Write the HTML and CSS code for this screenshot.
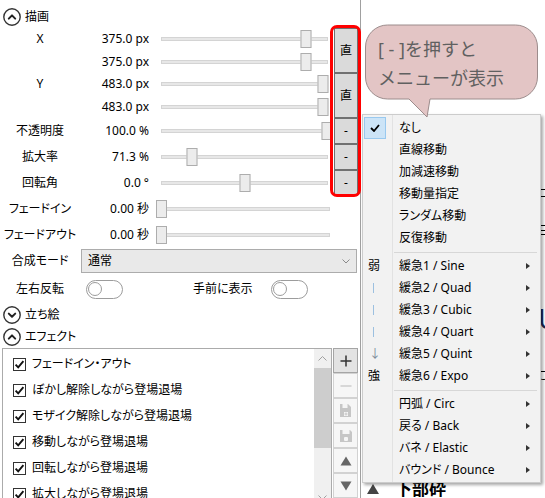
FILE: index.html
```html
<!DOCTYPE html>
<html lang="ja">
<head>
<meta charset="utf-8">
<title>描画</title>
<link rel="stylesheet" href="styles.css">
</head>
<body>
<div class="app">
  <div class="left">
    <div class="hdr first">
      <svg class="circ" viewBox="0 0 18 18" width="18" height="18"><circle cx="9" cy="9" r="8.2" fill="none" stroke="#333" stroke-width="1.4"/><path d="M5.8 10.6 L9 7.4 L12.2 10.6" fill="none" stroke="#222" stroke-width="2" stroke-linecap="round" stroke-linejoin="round"/></svg>
      <span class="ht">描画</span>
    </div>
    <div class="grid">
      <div class="lbl">X</div><div class="val">375.0 px</div>
      <div class="sl"><div class="track"><div class="thumb" style="left:87.1%"></div></div></div>
      <div class="kb span2">直</div>

      <div class="lbl"></div><div class="val">375.0 px</div>
      <div class="sl"><div class="track"><div class="thumb" style="left:87.1%"></div></div></div>

      <div class="lbl">Y</div><div class="val">483.0 px</div>
      <div class="sl"><div class="track"><div class="thumb" style="left:97.6%"></div></div></div>
      <div class="kb span2">直</div>

      <div class="lbl"></div><div class="val">483.0 px</div>
      <div class="sl"><div class="track"><div class="thumb" style="left:97.6%"></div></div></div>

      <div class="lbl">不透明度</div><div class="val">100.0 %</div>
      <div class="sl"><div class="track"><div class="thumb" style="left:100%"></div></div></div>
      <div class="kb">-</div>

      <div class="lbl">拡大率</div><div class="val">71.3 %</div>
      <div class="sl"><div class="track"><div class="thumb" style="left:18.3%"></div></div></div>
      <div class="kb">-</div>

      <div class="lbl">回転角</div><div class="val">0.0 °</div>
      <div class="sl"><div class="track"><div class="thumb" style="left:50.3%"></div></div></div>
      <div class="kb">-</div>

      <div class="lbl">フェードイン</div><div class="val">0.00 秒</div>
      <div class="sl fade"><div class="track"><div class="thumb"></div></div></div>

      <div class="lbl">フェードアウト</div><div class="val">0.00 秒</div>
      <div class="sl fade"><div class="track"><div class="thumb"></div></div></div>
    </div>

    <div class="row dd-row">
      <div class="lbl">合成モード</div>
      <div class="dd"><span>通常</span><svg width="8" height="5" viewBox="0 0 8 5"><path d="M0.5 0.5 L4 4 L7.5 0.5" stroke="#8a8a8a" fill="none"/></svg></div>
    </div>
    <div class="row tg-row">
      <div class="lbl">左右反転</div>
      <div class="toggle t1"><span class="knob"></span></div>
      <div class="lbl2">手前に表示</div>
      <div class="toggle t2"><span class="knob"></span></div>
    </div>

    <div class="hdr">
      <svg class="circ" viewBox="0 0 18 18" width="18" height="18"><circle cx="9" cy="9" r="8.2" fill="none" stroke="#333" stroke-width="1.4"/><path d="M5.8 7.6 L9 10.8 L12.2 7.6" fill="none" stroke="#222" stroke-width="2" stroke-linecap="round" stroke-linejoin="round"/></svg>
      <span class="ht">立ち絵</span>
    </div>
    <div class="hdr">
      <svg class="circ" viewBox="0 0 18 18" width="18" height="18"><circle cx="9" cy="9" r="8.2" fill="none" stroke="#333" stroke-width="1.4"/><path d="M5.8 10.6 L9 7.4 L12.2 10.6" fill="none" stroke="#222" stroke-width="2" stroke-linecap="round" stroke-linejoin="round"/></svg>
      <span class="ht">エフェクト</span>
    </div>

    <div class="fx">
      <div class="list">
        <div class="items">
          <div class="it"><svg class="cb" width="13" height="13" viewBox="0 0 13 13"><rect x="0.5" y="0.5" width="12" height="12" fill="#fff" stroke="#333"/><path d="M2.6 6.6 L5.2 9.4 L10.4 3.2" fill="none" stroke="#111" stroke-width="1.9"/></svg><span>フェードイン・アウト</span></div>
          <div class="it"><svg class="cb" width="13" height="13" viewBox="0 0 13 13"><rect x="0.5" y="0.5" width="12" height="12" fill="#fff" stroke="#333"/><path d="M2.6 6.6 L5.2 9.4 L10.4 3.2" fill="none" stroke="#111" stroke-width="1.9"/></svg><span>ぼかし解除しながら登場退場</span></div>
          <div class="it"><svg class="cb" width="13" height="13" viewBox="0 0 13 13"><rect x="0.5" y="0.5" width="12" height="12" fill="#fff" stroke="#333"/><path d="M2.6 6.6 L5.2 9.4 L10.4 3.2" fill="none" stroke="#111" stroke-width="1.9"/></svg><span>モザイク解除しながら登場退場</span></div>
          <div class="it"><svg class="cb" width="13" height="13" viewBox="0 0 13 13"><rect x="0.5" y="0.5" width="12" height="12" fill="#fff" stroke="#333"/><path d="M2.6 6.6 L5.2 9.4 L10.4 3.2" fill="none" stroke="#111" stroke-width="1.9"/></svg><span>移動しながら登場退場</span></div>
          <div class="it"><svg class="cb" width="13" height="13" viewBox="0 0 13 13"><rect x="0.5" y="0.5" width="12" height="12" fill="#fff" stroke="#333"/><path d="M2.6 6.6 L5.2 9.4 L10.4 3.2" fill="none" stroke="#111" stroke-width="1.9"/></svg><span>回転しながら登場退場</span></div>
          <div class="it"><svg class="cb" width="13" height="13" viewBox="0 0 13 13"><rect x="0.5" y="0.5" width="12" height="12" fill="#fff" stroke="#333"/><path d="M2.6 6.6 L5.2 9.4 L10.4 3.2" fill="none" stroke="#111" stroke-width="1.9"/></svg><span>拡大しながら登場退場</span></div>
        </div>
        <div class="sb">
          <div class="sb-btn"><svg width="9" height="5" viewBox="0 0 9 5"><path d="M0.5 4.5 L4.5 0.5 L8.5 4.5" stroke="#a0a0a0" fill="none"/></svg></div>
          <div class="sb-thumb"></div>
          <div class="sb-rest"></div>
          <div class="sb-btn"><svg width="9" height="5" viewBox="0 0 9 5"><path d="M0.5 0.5 L4.5 4.5 L8.5 0.5" stroke="#a0a0a0" fill="none"/></svg></div>
        </div>
      </div>
      <div class="tools">
        <div class="tb on"><svg width="12" height="12" viewBox="0 0 12 12"><path d="M6 0.5 V11.5 M0.5 6 H11.5" stroke="#333" stroke-width="1.5"/></svg></div>
        <div class="tb"><svg width="12" height="2" viewBox="0 0 12 2"><path d="M0.5 1 H11.5" stroke="#c4c4c4" stroke-width="1.2"/></svg></div>
        <div class="tb"><svg width="11" height="13" viewBox="0 0 11 13"><path d="M0 0 H8 L11 3 V13 H0 Z" fill="#c6c6c6"/><rect x="2.5" y="0" width="5" height="4" fill="#f5f5f5"/><rect x="4" y="8" width="4" height="4" fill="#f5f5f5"/><path d="M6 8.5 V11.5 M4.5 10 H7.5" stroke="#c6c6c6" stroke-width="1"/></svg></div>
        <div class="tb"><svg width="12" height="12" viewBox="0 0 12 12"><path d="M0 0 H10 L12 2 V12 H0 Z" fill="#c6c6c6"/><rect x="2.5" y="0" width="7" height="4" fill="#f5f5f5"/><rect x="4" y="7" width="4" height="4" rx="1" fill="#f5f5f5"/></svg></div>
        <div class="tb"><svg width="12" height="10" viewBox="0 0 12 10"><path d="M6 0.5 L11.5 9.5 H0.5 Z" fill="#666"/></svg></div>
        <div class="tb"><svg width="12" height="10" viewBox="0 0 12 10"><path d="M0.5 0.5 H11.5 L6 9.5 Z" fill="#666"/></svg></div>
      </div>
    </div>
  </div>

  <div class="right">
    <div class="frag f1">コ</div>
    <div class="frag f2">三</div>
    <div class="frag f3">U</div>
    <div class="frag f4">ご</div>
    <div class="rhdr"><span class="rtri"></span><span>下部砕</span></div>
  </div>

  <div class="redbox"></div>

  <div class="bubble">
    <svg class="bub-bg" width="174" height="94" viewBox="0 0 174 94"><path d="M22.5 1 H150.5 A22 22 0 0 1 172.5 23 V53 A22 22 0 0 1 150.5 75 H65 L62 93 L44 75 H22.5 A22 22 0 0 1 0.5 53 V23 A22 22 0 0 1 22.5 1 Z" fill="#e3c5c5" stroke="#9c8c8c" stroke-width="1"/></svg>
    <div class="bub-text">[ - ]を押すと<br>メニューが表示</div>
  </div>

  <div class="menu">
    <div class="mi"><span class="g"><span class="chk"><svg width="10" height="8" viewBox="0 0 10 8"><path d="M1 4 L4 7 L9 1" stroke="#000" stroke-width="1.8" fill="none"/></svg></span></span><span class="t">なし</span></div>
    <div class="mi"><span class="g"></span><span class="t">直線移動</span></div>
    <div class="mi"><span class="g"></span><span class="t">加減速移動</span></div>
    <div class="mi"><span class="g"></span><span class="t">移動量指定</span></div>
    <div class="mi"><span class="g"></span><span class="t">ランダム移動</span></div>
    <div class="mi"><span class="g"></span><span class="t">反復移動</span></div>
    <div class="sep"></div>
    <div class="mi"><span class="g">弱</span><span class="t">緩急1 / Sine</span><span class="arr"></span></div>
    <div class="mi"><span class="g"><span class="bar"></span></span><span class="t">緩急2 / Quad</span><span class="arr"></span></div>
    <div class="mi"><span class="g"><span class="bar"></span></span><span class="t">緩急3 / Cubic</span><span class="arr"></span></div>
    <div class="mi"><span class="g"><span class="bar"></span></span><span class="t">緩急4 / Quart</span><span class="arr"></span></div>
    <div class="mi"><span class="g dn">↓</span><span class="t">緩急5 / Quint</span><span class="arr"></span></div>
    <div class="mi"><span class="g">強</span><span class="t">緩急6 / Expo</span><span class="arr"></span></div>
    <div class="sep"></div>
    <div class="mi"><span class="g"></span><span class="t">円弧 / Circ</span><span class="arr"></span></div>
    <div class="mi"><span class="g"></span><span class="t">戻る / Back</span><span class="arr"></span></div>
    <div class="mi"><span class="g"></span><span class="t">バネ / Elastic</span><span class="arr"></span></div>
    <div class="mi"><span class="g"></span><span class="t">バウンド / Bounce</span><span class="arr"></span></div>
  </div>
</div>
</body>
</html>
```

FILE: styles.css
```css
* { box-sizing: border-box; }
html, body { margin: 0; padding: 0; }
body {
  width: 545px;
  height: 498px;
  overflow: hidden;
  background: #fff;
  font-family: "Noto Sans", "Noto Sans CJK JP", sans-serif;
  font-size: 12px;
  line-height: 16px;
  color: #000;
  font-feature-settings: "palt";
}
.app { position: relative; display: flex; height: 498px; }

.left {
  flex: none;
  width: 361px;
  height: 498px;
  border-right: 1px solid #a0a0a0;
  padding-right: 2px;
  overflow: hidden;
}

.hdr { display: flex; align-items: center; height: 22px; padding-left: 3px; gap: 4px; }
.hdr.first { height: 28px; padding-top: 6px; }
.circ { flex: none; display: block; }
.ht { line-height: 16px; }

.grid {
  display: grid;
  grid-template-columns: 80px 69px 1fr 24px;
  grid-template-rows: repeat(4, 22.5px) repeat(5, 26px);
}
.lbl { text-align: center; align-self: center; white-space: nowrap; }
.val { text-align: right; align-self: center; white-space: nowrap; }
.sl { position: relative; }
.track {
  position: absolute;
  left: 12px;
  right: 6px;
  top: 50%;
  height: 4px;
  margin-top: -2px;
  background: #e7e7e7;
  border: 1px solid #d4d4d4;
}
.thumb {
  position: absolute;
  top: 50%;
  width: 11px;
  height: 18px;
  transform: translate(-50%, -50%);
  background: #ececec;
  border: 1px solid #adadad;
}
.sl.fade { grid-column: span 2; }
.sl.fade .track { left: 7px; right: 28px; }
.sl.fade .thumb { left: -1px; transform: translateY(-50%); }

.kb {
  border: 1px solid #707070;
  background: #dadada;
  display: flex;
  align-items: center;
  justify-content: center;
  font-size: 12px;
}
.kb.span2 { grid-row: span 2; }

.row { display: flex; align-items: center; }
.row .lbl { width: 80px; flex: none; }
.dd-row { height: 26px; }
.dd {
  margin-left: 1px;
  width: 276px;
  height: 24px;
  border: 1px solid #acacac;
  background: #e9e9e9;
  display: flex;
  align-items: center;
  justify-content: space-between;
  padding: 0 6px 0 6px;
}
.tg-row { height: 30px; }
.toggle {
  position: relative;
  flex: none;
  width: 37px;
  height: 19px;
  border: 1.5px solid #9c9c9c;
  border-radius: 10px;
}
.toggle .knob {
  position: absolute;
  left: 1px;
  top: 1px;
  width: 14px;
  height: 14px;
  border: 1.5px solid #9c9c9c;
  border-radius: 50%;
}
.t1 { margin-left: 6px; }
.lbl2 { margin-left: 70px; white-space: nowrap; }
.t2 { margin-left: 18px; }

.fx { display: flex; padding-left: 2px; }
.list {
  width: 330px;
  height: 160px;
  border: 1px solid #ababab;
  display: flex;
}
.items { flex: 1; padding-top: 2px; }
.it { height: 26px; display: flex; align-items: center; padding-left: 10px; gap: 6px; white-space: nowrap; }
.cb { flex: none; display: block; }
.sb { width: 17px; background: #f0f0f0; display: flex; flex-direction: column; }
.sb-btn { height: 19px; display: flex; align-items: center; justify-content: center; }
.sb-thumb { height: 80px; background: #cdcdcd; }
.sb-rest { height: 40px; }
.tools { width: 25px; margin-left: 1px; display: flex; flex-direction: column; }
.tb {
  height: 25px;
  border: 1px solid #d2d2d2;
  background: #f6f6f6;
  display: flex;
  align-items: center;
  justify-content: center;
}
.tb.on { background: #e3e3e3; border-color: #a5a5a5; }

.right { flex: 1; height: 498px; overflow: hidden; display: flex; flex-direction: column; }
.frag { margin-left: 177px; white-space: nowrap; line-height: 14px; }
.f1 { margin-top: 187px; }
.f2 { margin-top: 23px; }
.f3 { margin-top: 65px; font-size: 28px; line-height: 30px; color: #1c2a55; }
.f4 { margin-top: 36px; }
.rhdr { margin-top: 96px; display: flex; align-items: center; gap: 16px; padding-left: 6px; font-size: 17px; line-height: 20px; font-weight: bold; white-space: nowrap; }
.rtri { width: 0; height: 0; border-left: 6px solid transparent; border-right: 6px solid transparent; border-bottom: 10px solid #444; }

.redbox {
  position: absolute;
  left: 330px;
  top: 25px;
  width: 31px;
  height: 172px;
  border: 3px solid #ff0000;
  border-radius: 7px;
  z-index: 4;
}

.bubble {
  position: absolute;
  left: 365px;
  top: 24px;
  width: 174px;
  height: 94px;
  z-index: 6;
}
.bub-bg { position: absolute; left: 0; top: 0; }
.bub-text {
  position: relative;
  padding: 11px 0 0 13px;
  font-size: 18px;
  line-height: 29px;
  color: #606060;
  white-space: nowrap;
  font-feature-settings: normal;
}

.menu {
  position: absolute;
  left: 362px;
  top: 114px;
  width: 179px;
  padding: 2px 0 1px;
  border: 1px solid #cccccc;
  background: linear-gradient(to right, #f2f2f2 29px, #e2e2e2 29px, #e2e2e2 30px, #f2f2f2 30px);
  box-shadow: 2px 2px 3px rgba(0, 0, 0, 0.35);
  z-index: 5;
}
.mi { height: 22px; display: flex; align-items: center; white-space: nowrap; }
.g { flex: none; width: 29px; height: 22px; padding-left: 5px; display: flex; align-items: center; }
.chk {
  margin-left: -4px;
  width: 22px;
  height: 22px;
  background: #cce4f7;
  border: 1px solid #99c9ef;
  display: flex;
  align-items: center;
  justify-content: center;
}
.bar { width: 1px; height: 10px; background: #9cc0e0; margin-left: 5px; }
.dn { color: #7d8a99; padding-left: 6px; }
.t { flex: 1; padding-left: 7px; }
.arr {
  flex: none;
  width: 0;
  height: 0;
  border-left: 4px solid #333;
  border-top: 3.5px solid transparent;
  border-bottom: 3.5px solid transparent;
  margin-right: 10px;
}
.sep {
  height: 6px;
  margin-left: 31px;
  margin-right: 3px;
  background: linear-gradient(#d7d7d7, #d7d7d7) center / 100% 1px no-repeat;
}
```
